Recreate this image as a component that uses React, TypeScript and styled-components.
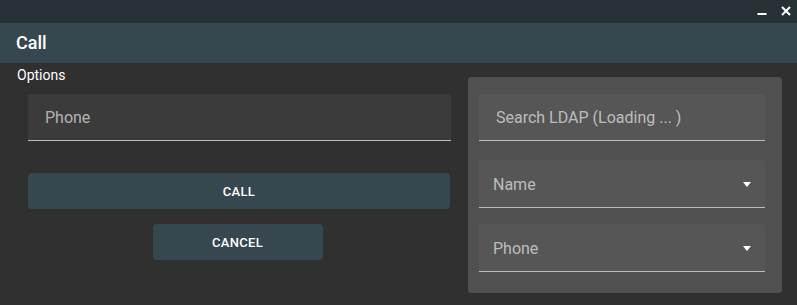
import styled, { createGlobalStyle } from 'styled-components';

const GlobalStyle = createGlobalStyle`
  html, body {
    margin: 0;
    padding: 0;
    background: #303030;
    font-family: Roboto, 'Liberation Sans', sans-serif;
    color: #fff;
  }
  * {
    box-sizing: border-box;
  }
`;

const App: React.FC = () => {
  return (
    <Window>
      <GlobalStyle />
      <TitleBar>
        <WindowButton aria-label="minimize">
          <svg width="10" height="10" viewBox="0 0 10 10">
            <rect x="0.5" y="7" width="9" height="2" fill="#fff" />
          </svg>
        </WindowButton>
        <WindowButton aria-label="close">
          <svg width="10" height="10" viewBox="0 0 10 10">
            <path d="M1 1 L9 9 M9 1 L1 9" stroke="#fff" strokeWidth="2" />
          </svg>
        </WindowButton>
      </TitleBar>
      <Header>Call</Header>
      <Body>
        <LeftSide>
          <SectionLabel>Options</SectionLabel>
          <Form>
            <TextField tone="dark">
              <Placeholder indent={17}>Phone</Placeholder>
            </TextField>
            <PrimaryButton>Call</PrimaryButton>
            <CancelButton>Cancel</CancelButton>
          </Form>
        </LeftSide>
        <Panel>
          <TextField tone="light">
            <Placeholder indent={17}>Search LDAP (Loading ... )</Placeholder>
          </TextField>
          <SelectField tone="light">
            <Placeholder>Name</Placeholder>
            <Caret />
          </SelectField>
          <SelectField tone="light">
            <Placeholder>Phone</Placeholder>
            <Caret />
          </SelectField>
        </Panel>
      </Body>
    </Window>
  );
};

const Window = styled.div`
  width: 797px;
  height: 305px;
  display: flex;
  flex-direction: column;
  background: #303030;
  overflow: hidden;
`;

const TitleBar = styled.div`
  height: 23px;
  background: #263238;
  display: flex;
  align-items: center;
  justify-content: flex-end;
  gap: 14px;
  padding: 0 6px 2px 0;
`;

const WindowButton = styled.div`
  width: 10px;
  height: 10px;
  display: flex;
`;

const Header = styled.div`
  height: 40px;
  background: #37474f;
  display: flex;
  align-items: center;
  padding-left: 16px;
  font-size: 18px;
  font-weight: 500;
  padding-bottom: 1px;
`;

const Body = styled.div`
  flex: 1;
  display: flex;
  padding: 0 15px 0 17px;
  gap: 17px;
`;

const LeftSide = styled.div`
  flex: 1;
  display: flex;
  flex-direction: column;
`;

const SectionLabel = styled.div`
  font-size: 14px;
  line-height: 16px;
  margin-top: 4px;
`;

const Form = styled.div`
  display: flex;
  flex-direction: column;
  align-items: center;
  padding-left: 11px;
  margin-top: 11px;
`;

const TextField = styled.div<{ tone: 'dark' | 'light' }>`
  position: relative;
  width: 100%;
  height: 47px;
  display: flex;
  align-items: center;
  background: ${({ tone }) => (tone === 'dark' ? '#3b3b3b' : '#565656')};
  border-bottom: 1px solid #bdbdbd;
  border-radius: 2px 2px 0 0;
  flex-shrink: 0;
`;

const SelectField = styled(TextField)`
  height: 48px;
`;

const Placeholder = styled.span<{ indent?: number }>`
  padding-left: ${({ indent }) => indent ?? 14}px;
  font-size: 16px;
  color: rgba(255, 255, 255, 0.62);
  margin-top: 1px;
`;

const Caret = styled.span`
  position: absolute;
  right: 14px;
  top: 50%;
  margin-top: -2px;
  width: 0;
  height: 0;
  border-left: 4px solid transparent;
  border-right: 4px solid transparent;
  border-top: 5px solid #fff;
`;

const PrimaryButton = styled.button`
  width: calc(100% - 1px);
  align-self: flex-start;
  height: 36px;
  margin-top: 32px;
  border: none;
  border-radius: 4px;
  background: #37474f;
  color: #fff;
  font-family: Roboto, 'Liberation Sans', sans-serif;
  font-size: 13px;
  font-weight: 500;
  text-transform: uppercase;
  letter-spacing: 0.3px;
`;

const CancelButton = styled(PrimaryButton)`
  width: 170px;
  align-self: center;
  margin-top: 15px;
  margin-left: -4px;
`;

const Panel = styled.div`
  width: 314px;
  height: 216px;
  margin-top: 14px;
  background: #505050;
  border-radius: 4px;
  padding: 17px 17px 0 11px;
  display: flex;
  flex-direction: column;
  gap: 19px;

  & > :nth-child(3) {
    margin-top: -3px;
  }
`;

export default App;
